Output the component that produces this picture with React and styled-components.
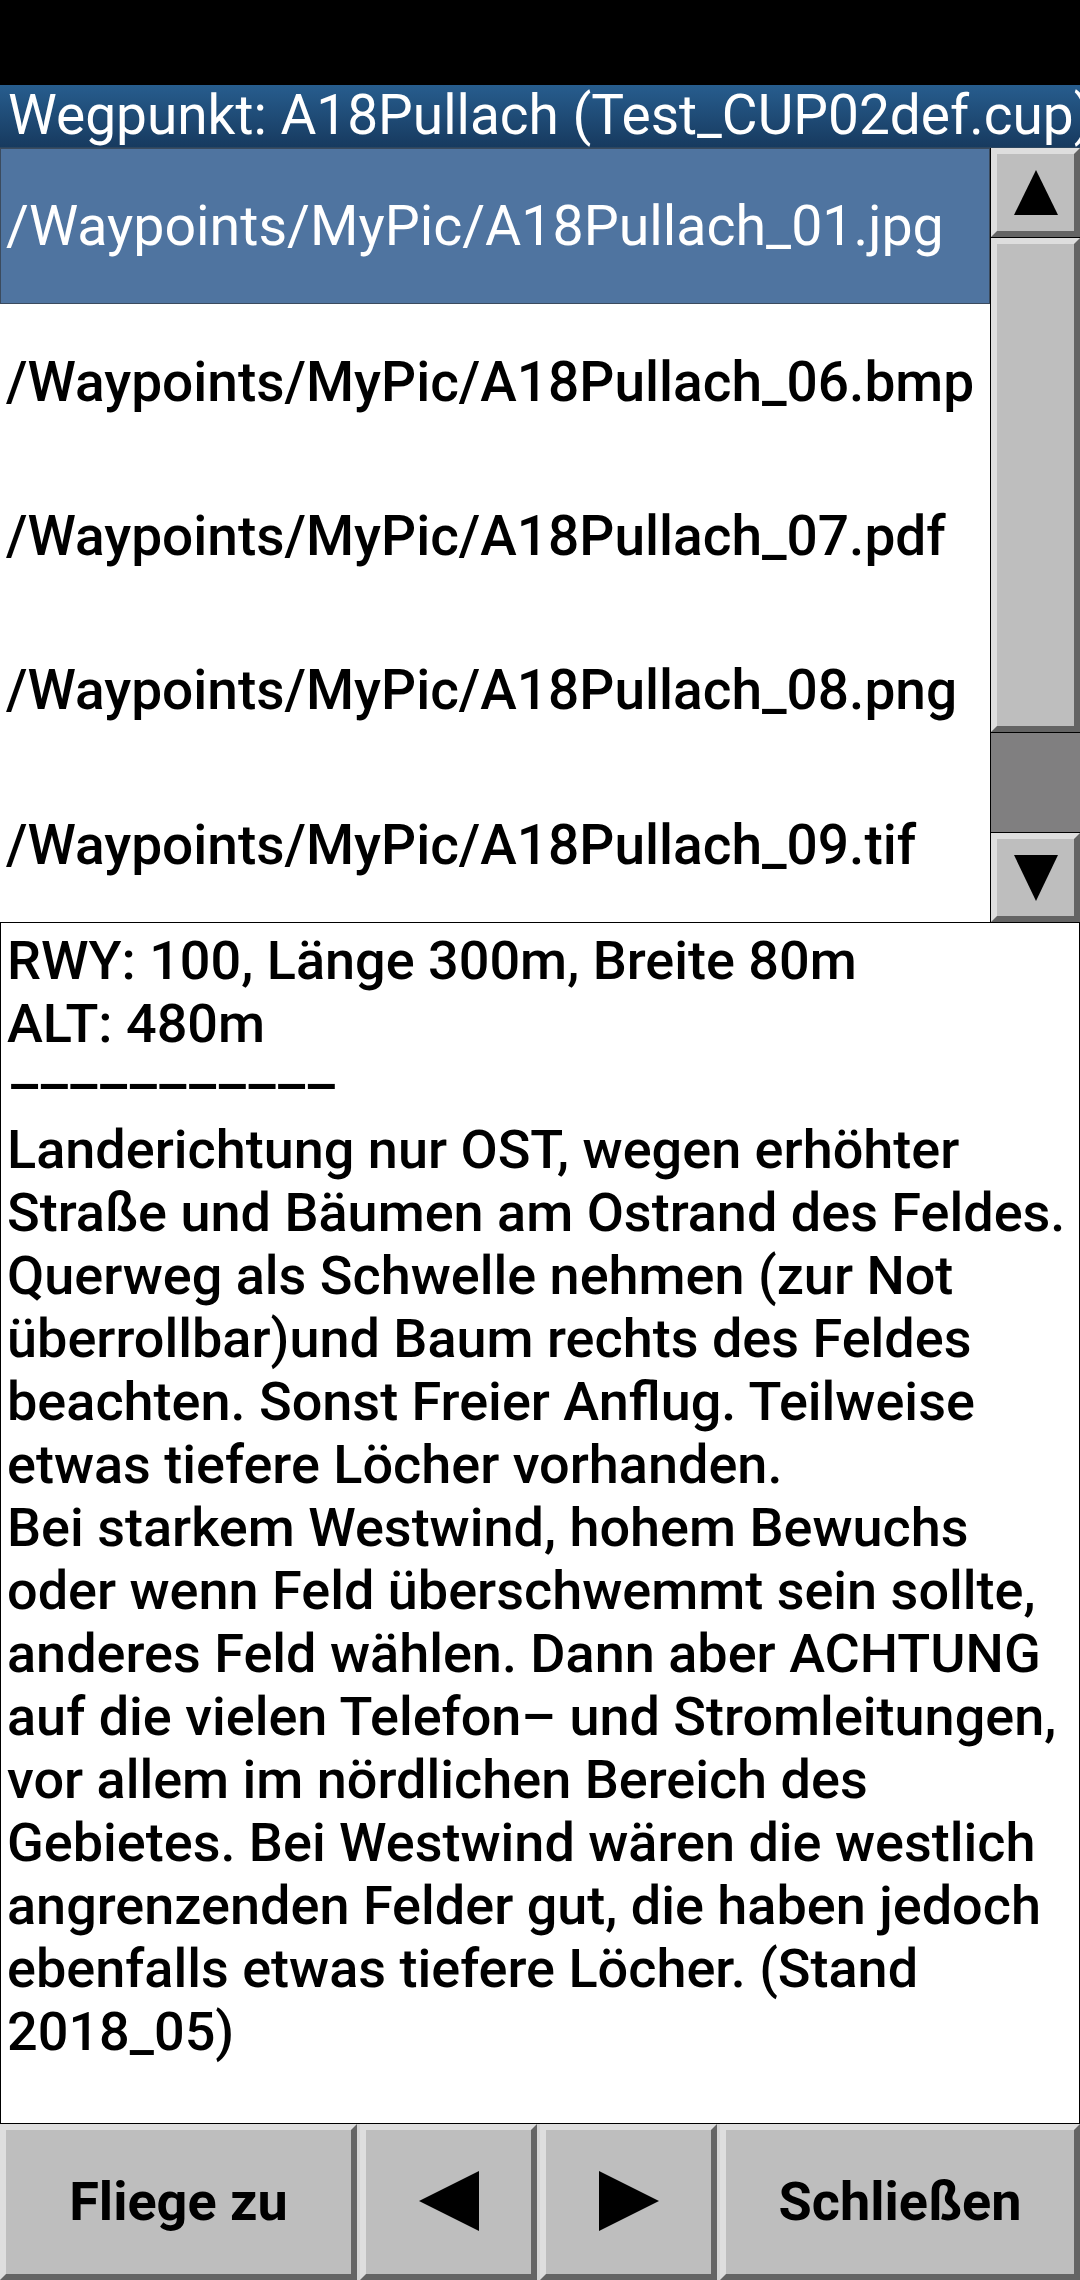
import React from "react";
import styled, { createGlobalStyle, css } from "styled-components";

const GlobalStyle = createGlobalStyle`
  html, body {
    margin: 0;
    padding: 0;
    background: #000;
  }
  body {
    font-family: Roboto, "Liberation Sans", sans-serif;
  }
`;

const bevel = css`
  box-sizing: border-box;
  background: #bebebe;
  border: 6px solid;
  border-color: #dedede #646464 #646464 #dedede;
`;

const Screen = styled.div`
  width: 1080px;
  height: 2280px;
  display: flex;
  flex-direction: column;
  background: #fff;
  overflow: hidden;
`;

const StatusBar = styled.div`
  height: 85px;
  flex: none;
  background: #000;
`;

const TitleBar = styled.div`
  height: 63px;
  flex: none;
  box-sizing: border-box;
  padding-left: 8px;
  background: linear-gradient(#275d8e, #173a5f);
  border-bottom: 1px solid #2c4660;
  color: #fff;
  font-size: 55px;
  line-height: 61px;
  white-space: nowrap;
  overflow: hidden;
`;

const ListArea = styled.div`
  height: 774px;
  flex: none;
  display: flex;
`;

const List = styled.div`
  flex: 1;
  display: flex;
  flex-direction: column;
`;

const Row = styled.div`
  flex: 1;
  display: flex;
  align-items: center;
  box-sizing: border-box;
  padding-left: 6px;
  font-size: 55px;
  font-weight: 500;
  color: #000;
  white-space: nowrap;
  overflow: hidden;
  ${(p) =>
    p.$selected &&
    css`
      background: #4f74a0;
      color: #fff;
      font-size: 55.5px;
      font-weight: 400;
      border: 1px solid #3b4b5e;
      padding-left: 5px;
    `}
`;

const ScrollBar = styled.div`
  width: 90px;
  flex: none;
  display: flex;
  flex-direction: column;
  gap: 1px;
  background: #000;
  padding-left: 1px;
  box-sizing: border-box;
`;

const ScrollButton = styled.div`
  ${bevel}
  height: 89px;
  flex: none;
  display: flex;
  align-items: center;
  justify-content: center;
`;

const Thumb = styled.div`
  ${bevel}
  height: 494px;
  flex: none;
`;

const Track = styled.div`
  flex: 1;
  background: #807f80;
`;

const InfoBox = styled.div`
  flex: 1;
  box-sizing: border-box;
  border: 1px solid #000;
  padding: 6px 6px 0 6px;
  font-size: 54px;
  line-height: 63px;
  font-weight: 500;
  color: #000;
  overflow: hidden;
`;

const Line = styled.div`
  white-space: nowrap;
`;

const Rule = styled(Line)`
  letter-spacing: -5px;
`;

const ButtonBar = styled.div`
  height: 156px;
  flex: none;
  display: grid;
  grid-template-columns: 357px 177px 177px 1fr;
  gap: 3px;
  background: #d4d4d4;
`;

const Button = styled.div`
  ${bevel}
  display: flex;
  align-items: center;
  justify-content: center;
  font-size: 54px;
  font-weight: 700;
  color: #000;
  padding-bottom: 2px;
`;

const Arrow = ({ dir, w, h }) => {
  const pts = {
    up: `${w / 2},0 ${w},${h} 0,${h}`,
    down: `0,0 ${w},0 ${w / 2},${h}`,
    left: `0,${h / 2} ${w},0 ${w},${h}`,
    right: `0,0 ${w},${h / 2} 0,${h}`,
  }[dir];
  return (
    <svg width={w} height={h} viewBox={`0 0 ${w} ${h}`}>
      <polygon points={pts} fill="#000" />
    </svg>
  );
};

const files = [
  "/Waypoints/MyPic/A18Pullach_01.jpg",
  "/Waypoints/MyPic/A18Pullach_06.bmp",
  "/Waypoints/MyPic/A18Pullach_07.pdf",
  "/Waypoints/MyPic/A18Pullach_08.png",
  "/Waypoints/MyPic/A18Pullach_09.tif",
];

const info = [
  "RWY: 100, Länge 300m, Breite 80m",
  "ALT: 480m",
  null,
  "Landerichtung nur OST, wegen erhöhter",
  "Straße und Bäumen am Ostrand des Feldes.",
  "Querweg als Schwelle nehmen (zur Not",
  "überrollbar)und Baum rechts des Feldes",
  "beachten. Sonst Freier Anflug. Teilweise",
  "etwas tiefere Löcher vorhanden.",
  "Bei starkem Westwind, hohem Bewuchs",
  "oder wenn Feld überschwemmt sein sollte,",
  "anderes Feld wählen. Dann aber ACHTUNG",
  "auf die vielen Telefon– und Stromleitungen,",
  "vor allem im nördlichen Bereich des",
  "Gebietes. Bei Westwind wären die westlich",
  "angrenzenden Felder gut, die haben jedoch",
  "ebenfalls etwas tiefere Löcher. (Stand",
  "2018_05)",
];

export default function App() {
  return (
    <>
      <GlobalStyle />
      <Screen>
        <StatusBar />
        <TitleBar>Wegpunkt: A18Pullach (Test_CUP02def.cup)</TitleBar>
        <ListArea>
          <List>
            {files.map((f, i) => (
              <Row key={f} $selected={i === 0}>
                {f}
              </Row>
            ))}
          </List>
          <ScrollBar>
            <ScrollButton>
              <Arrow dir="up" w={44} h={45} />
            </ScrollButton>
            <Thumb />
            <Track />
            <ScrollButton>
              <Arrow dir="down" w={44} h={46} />
            </ScrollButton>
          </ScrollBar>
        </ListArea>
        <InfoBox>
          {info.map((l, i) =>
            l === null ? (
              <Rule key={i}>–––––––––––</Rule>
            ) : (
              <Line key={i}>{l}</Line>
            )
          )}
        </InfoBox>
        <ButtonBar>
          <Button>Fliege zu</Button>
          <Button>
            <Arrow dir="left" w={60} h={60} />
          </Button>
          <Button>
            <Arrow dir="right" w={60} h={60} />
          </Button>
          <Button>Schließen</Button>
        </ButtonBar>
      </Screen>
    </>
  );
}
